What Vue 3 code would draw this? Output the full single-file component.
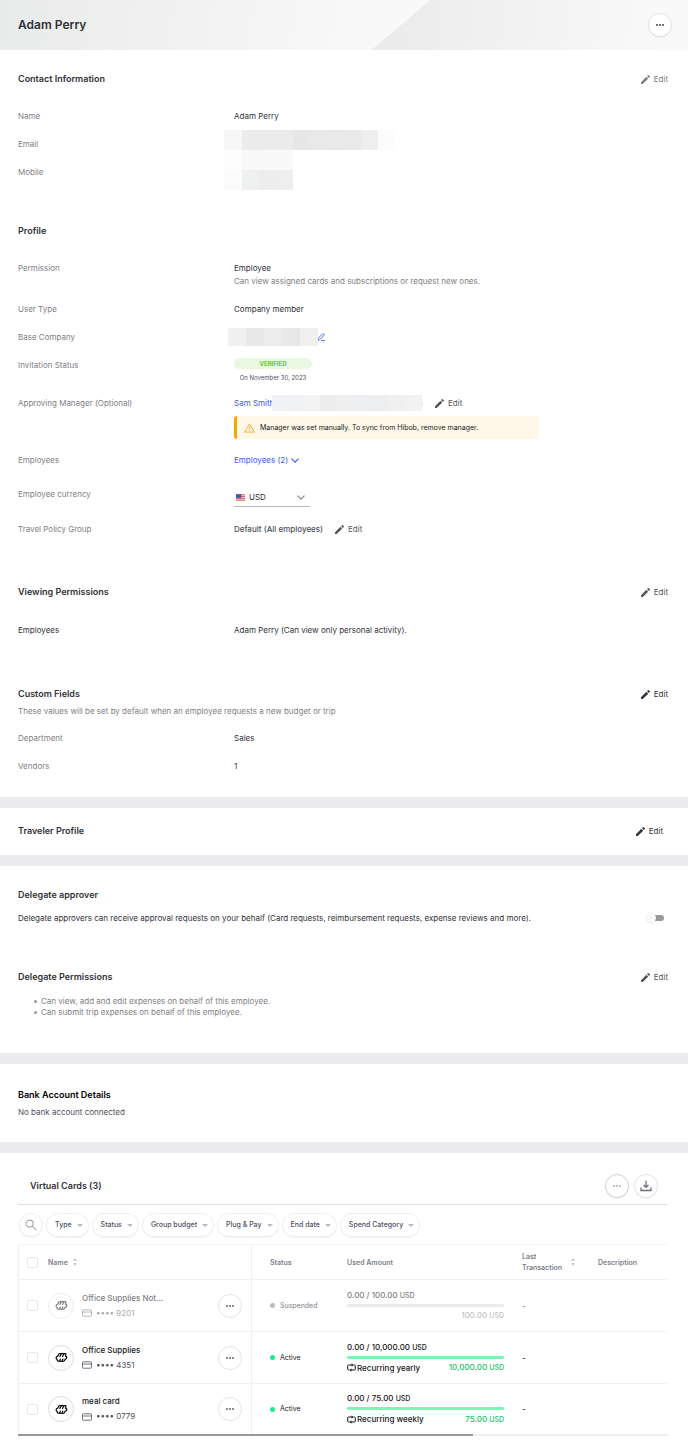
<script setup>
import { ref, h } from 'vue'

const currency = ref('USD')
const delegate = ref(false)

const Pencil = () =>
  h('svg', { viewBox: '3 3 18 18', width: 9, height: 9, fill: 'currentColor', 'aria-hidden': 'true' }, [
    h('path', {
      d: 'M3 17.6V21h3.4L17.4 10.3l-3.6-3.6L3 17.6zM20.7 7.04c.39-.39.39-1.02 0-1.41l-2.34-2.34c-.39-.39-1.02-.39-1.41 0l-1.9 1.9 3.6 3.6 2.05-1.75z'
    })
  ])

const Dots = () =>
  h('svg', { viewBox: '0 0 8 2', width: 8, height: 2, fill: 'currentColor', 'aria-hidden': 'true' }, [
    h('circle', { cx: 1, cy: 1, r: 0.9 }),
    h('circle', { cx: 4, cy: 1, r: 0.9 }),
    h('circle', { cx: 7, cy: 1, r: 0.9 })
  ])

const Sort = () =>
  h('svg', { viewBox: '0 0 6 8', width: 6, height: 8, fill: '#c9cbd1', 'aria-hidden': 'true' }, [
    h('path', { d: 'M3 0l2 3H1zM3 8l2-3H1z' })
  ])

const contactMask = [
  '#f7f7f7', '#ececec', '#ebebeb', '#ebebeb', '#e7e7e7', '#e8eae9', '#eaeaea', '#e8eae9', '#eeeeee', '#fcfcfc',
  '#fdfdfd', '#f9f9f9', '#f9f9f9', '#f9f9f9', '', '', '', '', '', '',
  '#fbfbfb', '#eff1f0', '#ededed', '#eeeeee'
]
const companyMask = ['#f0f0f0', '#e8e8e8', '#ededed', '#e8e8e8', '#f0f0f0']
const managerMask = ['#f1f2f6', '#eff1f5', '#f3f3f3', '#ededed', '#efeff0', '#eeeff2', '#edeeef', '#f0f0f1', '#f2f2f3']

const filters = ['Type', 'Status', 'Group budget', 'Plug & Pay', 'End date', 'Spend Category']

const cards = [
  { name: 'Office Supplies Not...', digits: '9201', status: 'Suspended', limit: '100.00', left: '100.00', recurring: '' },
  { name: 'Office Supplies', digits: '4351', status: 'Active', limit: '10,000.00', left: '10,000.00', recurring: 'Recurring yearly' },
  { name: 'meal card', digits: '0779', status: 'Active', limit: '75.00', left: '75.00', recurring: 'Recurring weekly' }
]
</script>

<template>
  <main class="page">
    <header class="banner">
      <h1>Adam Perry</h1>
      <button class="round" type="button" aria-label="More actions"><Dots /></button>
    </header>

    <section class="block contact">
      <div class="head">
        <h2>Contact Information</h2>
        <button class="edit soft" type="button"><Pencil />Edit</button>
      </div>
      <dl>
        <div class="row"><dt>Name</dt><dd>Adam Perry</dd></div>
        <div class="row">
          <dt>Email</dt>
          <dd><span class="mask mask-contact"><i v-for="(c, i) in contactMask" :key="i" :style="{ background: c }"></i></span></dd>
        </div>
        <div class="row"><dt>Mobile</dt><dd></dd></div>
      </dl>
    </section>

    <section class="block profile">
      <div class="head"><h2>Profile</h2></div>
      <dl>
        <div class="row">
          <dt>Permission</dt>
          <dd>Employee<p class="hint">Can view assigned cards and subscriptions or request new ones.</p></dd>
        </div>
        <div class="row"><dt>User Type</dt><dd>Company member</dd></div>
        <div class="row">
          <dt>Base Company</dt>
          <dd>
            <span class="mask mask-company"><i v-for="(c, i) in companyMask" :key="i" :style="{ background: c }"></i></span>
            <button class="company-edit" type="button" aria-label="Edit base company">
              <svg viewBox="0 0 8 8" width="8" height="8" fill="none" stroke="#5b74f0" stroke-width="1" stroke-linejoin="round">
                <path d="M0.8 7.2l.5-2L5.4 1a.9.9 0 0 1 1.3 0l.2.2a.9.9 0 0 1 0 1.3L2.8 6.7zM4.2 7.5h3.6" />
              </svg>
            </button>
          </dd>
        </div>
        <div class="row invitation">
          <dt>Invitation Status</dt>
          <dd><span class="verified">VERIFIED</span><p class="date">On November 30, 2023</p></dd>
        </div>
        <div class="row manager">
          <dt>Approving Manager (Optional)</dt>
          <dd>
            <div class="inline">
              <span class="person">
                <a href="#">Sam Smith</a>
                <span class="tail">)</span>
                <span class="mask mask-manager"><i v-for="(c, i) in managerMask" :key="i" :style="{ background: c }"></i></span>
              </span>
              <button class="edit mid" type="button"><Pencil />Edit</button>
            </div>
            <div class="alert" role="note">
              <svg viewBox="0 0 12 11" width="11" height="10" fill="none" stroke="#f2ac2e" stroke-width="1" stroke-linejoin="round" aria-hidden="true">
                <path d="M6 1L11.2 10H.8zM6 4v3M6 8v1" />
              </svg>
              Manager was set manually. To sync from Hibob, remove manager.
            </div>
          </dd>
        </div>
        <div class="row employees">
          <dt>Employees</dt>
          <dd>
            <button class="expand" type="button">
              Employees (2)
              <svg viewBox="0 0 8 5" width="8" height="5" fill="none" stroke="currentColor" stroke-width="1.1"><path d="M.5.6L4 4.1 7.5.6" /></svg>
            </button>
          </dd>
        </div>
        <div class="row currency">
          <dt><label for="currency">Employee currency</label></dt>
          <dd>
            <div class="select">
              <svg class="flag" viewBox="0 0 10 8" width="9" height="8" aria-hidden="true">
                <rect y="1" width="10" height="7" fill="#f4dfe2" />
                <path d="M0 1.5h10M0 3.5h10M0 5.5h10M0 7.5h10" stroke="#e2474b" stroke-width="1" />
                <rect y="1" width="6" height="4" fill="#3f55b8" />
              </svg>
              <select id="currency" v-model="currency"><option>USD</option><option>EUR</option></select>
              <svg class="chevron" viewBox="0 0 8 5" width="8" height="5" fill="none" stroke="#86888c" stroke-width="1.2" aria-hidden="true"><path d="M.5.6L4 4.1 7.5.6" /></svg>
            </div>
          </dd>
        </div>
        <div class="row">
          <dt>Travel Policy Group</dt>
          <dd class="inline slate"><span>Default (All employees)</span><button class="edit mid" type="button"><Pencil />Edit</button></dd>
        </div>
      </dl>
    </section>

    <section class="block viewing">
      <div class="head">
        <h2>Viewing Permissions</h2>
        <button class="edit mid" type="button"><Pencil />Edit</button>
      </div>
      <dl>
        <div class="row"><dt class="dark">Employees</dt><dd>Adam Perry (Can view only personal activity).</dd></div>
      </dl>
    </section>

    <section class="block custom">
      <div class="head">
        <h2>Custom Fields</h2>
        <button class="edit" type="button"><Pencil />Edit</button>
      </div>
      <p class="hint">These values will be set by default when an employee requests a new budget or trip</p>
      <dl>
        <div class="row"><dt>Department</dt><dd>Sales</dd></div>
        <div class="row"><dt>Vendors</dt><dd>1</dd></div>
      </dl>
    </section>

    <section class="block traveler band">
      <div class="head">
        <h2>Traveler Profile</h2>
        <button class="edit" type="button"><Pencil />Edit</button>
      </div>
    </section>

    <section class="block delegate band">
      <h2>Delegate approver</h2>
      <div class="head toggle-row">
        <label for="delegate">Delegate approvers can receive approval requests on your behalf (Card requests, reimbursement requests, expense reviews and more).</label>
        <input id="delegate" v-model="delegate" class="switch" type="checkbox" role="switch" />
      </div>
      <div class="head">
        <h2>Delegate Permissions</h2>
        <button class="edit mid" type="button"><Pencil />Edit</button>
      </div>
      <ul>
        <li>Can view, add and edit expenses on behalf of this employee.</li>
        <li>Can submit trip expenses on behalf of this employee.</li>
      </ul>
    </section>

    <section class="block bank band">
      <h2>Bank Account Details</h2>
      <p>No bank account connected</p>
    </section>

    <section class="block virtual band">
      <div class="head cards-head">
        <h2>Virtual Cards (3)</h2>
        <div class="actions">
          <button class="round pale" type="button" aria-label="More card actions"><Dots /></button>
          <button class="round" type="button" aria-label="Download">
            <svg viewBox="0 0 12 12" width="12" height="12" fill="none" stroke="#6d7076" stroke-width="1.3"><path d="M6 .8v6.4M3.6 5L6 7.4 8.400 5M1 7.500v3h10v-3" /></svg>
          </button>
        </div>
      </div>
      <div class="filters">
        <button class="round search" type="button" aria-label="Search">
          <svg viewBox="0 0 12 12" width="12" height="12" fill="none" stroke="#a5a8ae" stroke-width="1.1"><circle cx="4.6" cy="4.6" r="3.5" /><path d="M7.2 7.2l4 4" /></svg>
        </button>
        <button v-for="f in filters" :key="f" class="pill" type="button">
          {{ f }}<svg viewBox="0 0 6 3" width="6" height="3" fill="#b9bbc0"><path d="M0 0h6L3 3z" /></svg>
        </button>
      </div>
      <table>
        <colgroup><col class="c-check" /><col class="c-name" /><col class="c-status" /><col class="c-used" /><col class="c-last" /><col /></colgroup>
        <thead>
          <tr>
            <th><input type="checkbox" class="tick" aria-label="Select all cards" /></th>
            <th class="name"><span class="sortable near">Name <Sort /></span></th>
            <th>Status</th>
            <th>Used Amount</th>
            <th><span class="sortable">Last Transaction <Sort /></span></th>
            <th>Description</th>
          </tr>
        </thead>
        <tbody>
          <tr v-for="card in cards" :key="card.digits" :class="{ suspended: card.status === 'Suspended' }">
            <td><input type="checkbox" class="tick" :aria-label="'Select ' + card.name" /></td>
            <td class="name">
              <div class="card">
                <span class="logo">
                  <svg viewBox="0 0 24 20" width="13" height="11" fill="none" stroke="currentColor" stroke-width="2.2" stroke-linecap="round" stroke-linejoin="round">
                    <path d="M9 8L11 4.500C11.500 2 8 2 6.500 4.500L5 7.500C1.500 8 1 12.500 4 13.500M11 4.500C12.500 1.800 16 1.800 15.500 4.500L14 8M15.500 4.500C17.500 1.800 21 2.500 20 5.500L19.200 7.500C22.500 7.500 23 12.500 19 13L17.500 15.500C16 18 13 18 13.500 15.500L14.500 13M13.500 15.500C12 18 8 18 9 15.500L10 13M9 15.500C7 18 3.500 17 4 13.500" />
                  </svg>
                </span>
                <div class="card-text">
                  <strong>{{ card.name }}</strong>
                  <span class="number">
                    <svg viewBox="0 0 10 8" width="10" height="8" fill="none" stroke="currentColor" stroke-width="0.8"><rect x=".5" y=".8" width="9" height="6.4" rx=".8" /><path d="M.5 3h9" /></svg>
                    •••• {{ card.digits }}
                  </span>
                </div>
                <button class="round flat" type="button" :aria-label="'Actions for ' + card.name"><Dots /></button>
              </div>
            </td>
            <td><span class="status">{{ card.status }}</span></td>
            <td>
              <div class="used">
                <span>0.00 / {{ card.limit }} <small>USD</small></span>
                <div class="bar"></div>
                <div class="foot">
                  <span class="recurring"><template v-if="card.recurring">
                    <svg viewBox="0 0 9 9" width="9" height="9" fill="none" stroke="currentColor" stroke-width="1"><path d="M2.500 7H1.500q-.8 0-.8-.8V2.800q0-.8.800-.8H5M6.500 2h1q.8 0 .8.800V6.200q0 .8-.8.800H4" /><path d="M4.600.2v3.600L6.500 2zM4.400 5.200v3.600L2.500 7z" fill="currentColor" stroke="none" /></svg>
                    {{ card.recurring }}
                  </template></span>
                  <span class="left">{{ card.left }} <small>USD</small></span>
                </div>
              </div>
            </td>
            <td>-</td>
            <td></td>
          </tr>
        </tbody>
      </table>
      <div class="scroll"></div>
    </section>
  </main>
</template>

<style>
body { margin: 0; background: #fff; }
</style>

<style scoped>
.page { font: 8px/12px Inter, "Liberation Sans", sans-serif; color: #313238; background: #fff; padding-bottom: 11px; }
.page * { box-sizing: border-box; }
h1, h2, p, dl, dd, ul { margin: 0; padding: 0; }
h1 { font-size: 12px; line-height: 16px; font-weight: 600; }
h2 { font-size: 9px; line-height: 12px; font-weight: 600; }
a { color: #3d5af1; text-decoration: none; }
button, select { font: inherit; color: inherit; background: none; border: 0; padding: 0; cursor: pointer; }
svg { flex: none; display: block; }

.banner { position: relative; display: flex; align-items: center; justify-content: space-between; height: 50px; padding: 0 16px 0 18px; background: linear-gradient(100deg, #e9eaea 0%, #f9f9f9 54%); }
.banner::before { content: ""; position: absolute; inset: 0 0 0 54%; background: linear-gradient(100deg, #eaeaea, #f9f9f9 90%); clip-path: polygon(59px 0, 100% 0, 100% 100%, 0 100%); }
.banner > * { position: relative; }
.banner .round { color: #333; }
.round { display: flex; align-items: center; justify-content: center; flex: none; width: 24px; height: 24px; border: 1px solid #e5e5e8; border-radius: 50%; background: #fff; box-shadow: 0 1px 1px rgba(0, 0, 0, .06); color: #55585f; }

.block { padding: 0 20px 0 18px; }
.band { border-top: 11px solid #ebebf0; }
.head { display: flex; align-items: center; justify-content: space-between; }
.edit { display: inline-flex; align-items: center; gap: 4px; color: #313238; line-height: 12px; }
.edit.soft { color: #808084; }
.edit.mid { color: #55565b; }
.row { display: grid; grid-template-columns: 216px 1fr; margin-bottom: 16px; }
dt, .hint { color: #808084; }
dt.dark { color: #313238; }
dd { position: relative; }
.inline { display: flex; align-items: center; gap: 12px; }
.slate { color: #4d505c; }
.slate span { font-weight: 500; }

.contact { padding-top: 23px; }
.contact dl { padding-top: 25px; }
.mask { position: absolute; display: grid; }
.mask-contact { left: -10px; top: -8px; grid-template-columns: 18px repeat(9, 17px); grid-auto-rows: 20px; }
.mask-company { left: -6px; top: -3px; grid-template-columns: repeat(5, 18px); grid-auto-rows: 18px; }
.mask-manager { left: 38px; top: -2px; grid-template-columns: 14px repeat(8, 17px); grid-auto-rows: 16px; }

.profile { padding-top: 31px; }
.profile dl { padding-top: 25px; }
.profile .hint { padding-top: 1px; }
.company-edit { display: block; margin: 1px 0 0 83px; height: 10px; }
.verified { display: block; width: 78px; height: 11px; margin-top: -1px; border-radius: 6px; background: #e9f8e1; color: #66c92e; font-size: 6px; line-height: 11px; font-weight: 700; text-align: center; }
.date { width: 78px; margin-top: 3px; font-size: 6px; color: #4d505c; text-align: center; }
.invitation { margin-bottom: 13px; }
.person { position: relative; display: flex; justify-content: space-between; width: 189px; }
.tail { color: #808084; }
.alert { display: flex; align-items: center; gap: 5px; max-width: 304px; height: 23px; margin-top: 7px; padding-left: 7px; border-left: 3px solid #f5a800; border-radius: 3px; background: #fff8e8; color: #17181a; font-size: 7px; }
.manager { margin-bottom: 15px; }
.expand { display: flex; align-items: center; gap: 3px; color: #3d5af1; line-height: 12px; }
.employees { margin-bottom: 22px; }
.select { position: relative; display: flex; align-items: center; width: 76px; height: 19px; border-bottom: 1px solid #b5b6b9; }
.select select { width: 100%; height: 18px; padding-left: 15px; appearance: none; outline: 0; }
.flag { position: absolute; left: 2px; }
.chevron { position: absolute; right: 5px; pointer-events: none; }

.viewing { padding-top: 35px; }
.viewing dl { padding-top: 26px; }
.custom { padding: 36px 20px 9px 18px; }
.custom .hint { padding: 5px 0 15px; }

.traveler { padding: 17px 25px 18px 18px; }
.delegate { padding-top: 23px; padding-bottom: 35px; }
.toggle-row { padding: 11px 4px 47px 0; }
.switch { appearance: none; position: relative; flex: none; width: 14px; height: 6px; margin: 0; border-radius: 3px; background: #999; }
.switch::before { content: ""; position: absolute; left: -4px; top: -2px; width: 10px; height: 10px; border-radius: 50%; background: #fafafa; box-shadow: 0 0 1px rgba(0, 0, 0, .2); }
.switch:checked::before { left: 8px; }
ul { padding: 13px 0 0 16px; color: #808084; line-height: 11px; list-style: none; }
li { display: flex; align-items: center; gap: 4px; }
li::before { content: ""; width: 3px; height: 3px; border-radius: 50%; background: #98989b; }

.bank { padding-top: 25px; padding-bottom: 24px; }
.bank h2 { color: #000; }
.bank p { padding-top: 5px; color: #4d505c; }

.cards-head { height: 52px; padding: 14px 10px 0 12px; border-bottom: 1px solid #e2e2e5; }
.actions { display: flex; gap: 5px; }
.round.pale { border-color: #cfd1d6; color: #a5a8ae; }
.filters { display: flex; gap: 3px; padding: 8px 0 7px 1px; }
.pill { display: flex; align-items: center; gap: 5px; height: 24px; padding: 0 5px 0 8px; border: 1px solid #efeff1; border-radius: 12px; box-shadow: 0 1px 1px rgba(0, 0, 0, .06); color: #4d505c; font-size: 7px; font-weight: 500; white-space: nowrap; }
.search { border-color: #efeff1; }

table { width: 100%; table-layout: fixed; border-collapse: separate; border-spacing: 0; border-left: 1px solid #f0f0f2; border-top: 1px solid #f4f4f6; }
.c-check { width: 27px; } .c-name { width: 206px; } .c-status { width: 77px; } .c-used { width: 175px; } .c-last { width: 76px; }
th, td { padding: 0 0 0 18px; border-bottom: 1px solid #f2f2f4; text-align: left; vertical-align: middle; }
th { height: 35px; font-size: 7px; line-height: 11px; font-weight: 600; color: #7c7f89; }
td { height: 52px; color: #17181a; }
tr:last-child td { height: 50px; border-bottom: 0; }
th:first-child, td:first-child { padding-left: 8px; }
th.name, td.name { padding: 0 9px 0 2px; border-right: 1px solid #f0f0f2; }
.tick { appearance: none; display: block; width: 11px; height: 11px; margin: 0; border: 1px solid #e8e8eb; border-radius: 2px; background: #fff; }
.tick:checked { background: #3d5af1; }
.sortable { display: flex; align-items: center; justify-content: space-between; padding-right: 4px; }
.near { justify-content: flex-start; gap: 4px; }
.card { display: flex; align-items: center; gap: 8px; }
.logo { display: flex; align-items: center; justify-content: center; flex: none; width: 26px; height: 26px; border: 1px solid #dcdce3; border-radius: 50%; color: #000; }
.card-text { flex: 1; min-width: 0; }
.card-text strong { display: block; font-weight: 500; white-space: nowrap; line-height: 15px; }
.number { display: flex; align-items: center; gap: 4px; line-height: 15px; color: #4d505c; }
.flat { box-shadow: none; }
.status { display: flex; align-items: center; gap: 5px; font-size: 7px; }
.status::before { content: ""; width: 5px; height: 5px; border-radius: 50%; background: #19ec88; }
.used { width: 157px; font-weight: 500; }
small { font-size: 7px; }
.bar { height: 3px; margin: 2px 0; border-radius: 2px; background: #7af5b6; }
.foot { display: flex; justify-content: space-between; min-height: 14px; align-items: center; }
.recurring { display: flex; align-items: center; gap: 1px; }
.left { color: #20c268; }
.suspended .logo, .suspended .number { opacity: .5; }
.suspended .card-text strong, .suspended .status, .suspended td, .suspended .used { color: #808084; }
.suspended .status::before { background: #bdbdbf; }
.suspended .bar { background: #ebebeb; }
.suspended .left { color: #c4c4c8; }
.scroll { height: 2px; background: linear-gradient(90deg, #999 70%, #efefef 70%); }
</style>
